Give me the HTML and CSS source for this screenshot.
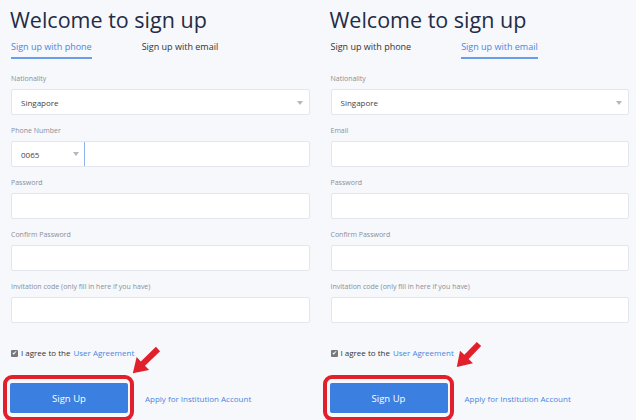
FILE: index.html
```html
<!DOCTYPE html>
<html lang="en">
<head>
  <meta charset="UTF-8">
  <title>Welcome to sign up</title>
  <link rel="stylesheet" href="styles.css">
</head>
<body>
  <div class="page">
    <div class="panel">
      <h1>Welcome to sign up</h1>
      <div class="tabs">
        <div class="tab active">Sign up with phone</div>
        <div class="tab">Sign up with email</div>
      </div>

      <div class="label">Nationality</div>
      <div class="box select">Singapore<span class="caret"></span></div>

      <div class="label">Phone Number</div>
      <div class="box phone">
        <div class="code">0065<span class="caret"></span></div>
        <div class="number"></div>
      </div>

      <div class="label">Password</div>
      <div class="box"></div>

      <div class="label">Confirm Password</div>
      <div class="box"></div>

      <div class="label">Invitation code (only fill in here if you have)</div>
      <div class="box"></div>

      <div class="agree"><span class="check">✔</span>I agree to the <a>User Agreement</a></div>

      <div class="actions">
        <div class="btn-wrap">
          <button class="btn">Sign Up</button>
          <span class="mark"></span>
        </div>
        <a class="inst">Apply for Institution Account</a>
      </div>
    </div>

    <div class="panel">
      <h1>Welcome to sign up</h1>
      <div class="tabs">
        <div class="tab">Sign up with phone</div>
        <div class="tab active">Sign up with email</div>
      </div>

      <div class="label">Nationality</div>
      <div class="box select">Singapore<span class="caret"></span></div>

      <div class="label">Email</div>
      <div class="box"></div>

      <div class="label">Password</div>
      <div class="box"></div>

      <div class="label">Confirm Password</div>
      <div class="box"></div>

      <div class="label">Invitation code (only fill in here if you have)</div>
      <div class="box"></div>

      <div class="agree"><span class="check">✔</span>I agree to the <a>User Agreement</a></div>

      <div class="actions">
        <div class="btn-wrap">
          <button class="btn">Sign Up</button>
          <span class="mark"></span>
        </div>
        <a class="inst">Apply for Institution Account</a>
      </div>
    </div>
  </div>

  <!-- red annotation arrows -->
  <svg class="arrows" width="636" height="420" viewBox="0 0 636 420">
    <polygon points="0,-3 21,-3 21,-9 35,0 21,9 21,3 0,3" transform="translate(158 349) rotate(136)"/>
    <polygon points="0,-3 18,-3 18,-9 32,0 18,9 18,3 0,3" transform="translate(479 344) rotate(134)"/>
  </svg>
</body>
</html>
```

FILE: styles.css
```css
html, body {
  margin: 0;
  padding: 0;
  width: 636px;
  height: 420px;
  overflow: hidden;
}

body {
  background: #f6f8fb;
  font-family: 'Open Sans', 'Noto Sans', sans-serif;
  color: #333;
  position: relative;
}

.page {
  display: flex;
  gap: 21px;
  padding: 0 7px 0 11px;
}

.panel {
  flex: 1;
  display: flex;
  flex-direction: column;
}

h1 {
  margin: 5px 0 0 -1px;
  font-size: 21.5px;
  line-height: 30px;
  font-weight: 400;
  color: #232c45;
}

.tabs {
  display: flex;
  gap: 50px;
  margin-bottom: 15px;
}

.tab {
  font-size: 9px;
  line-height: 16px;
  padding: 4px 0 2px;
  border-bottom: 2px solid transparent;
  color: #333;
}

.tab.active {
  color: #4a86e0;
  border-bottom-color: #6a9ee8;
}

.label {
  font-size: 7px;
  line-height: 10px;
  color: #8a8f99;
  margin-bottom: 5px;
}

.box {
  height: 26px;
  box-sizing: border-box;
  background: #fff;
  border: 1px solid #e3e6ec;
  border-radius: 2px;
  margin-bottom: 11px;
  font-size: 8px;
  color: #444;
  display: flex;
  align-items: center;
  position: relative;
}

.select {
  padding-left: 9px;
}

.caret {
  width: 0;
  height: 0;
  border-left: 3px solid transparent;
  border-right: 3px solid transparent;
  border-top: 4px solid #b4b8c0;
}

.select .caret {
  position: absolute;
  right: 6px;
  top: 11px;
}

.phone .code {
  width: 58px;
  height: 100%;
  padding-left: 9px;
  display: flex;
  align-items: center;
  justify-content: space-between;
  padding-right: 5px;
}

.phone .number {
  flex: 1;
  height: 100%;
  border-left: 1px solid #8fb3ec;
}

.agree {
  margin-top: 13px;
  display: flex;
  align-items: center;
  font-size: 8px;
  line-height: 12px;
  color: #333;
}

.agree a {
  color: #4a86e0;
  margin-left: 3px;
}

.check {
  width: 7px;
  height: 7px;
  background: #777;
  color: #fff;
  font-size: 6px;
  line-height: 7px;
  text-align: center;
  border-radius: 1px;
  margin-right: 3px;
}

.actions {
  margin-top: 24px;
  display: flex;
  align-items: center;
  gap: 17px;
}

.btn-wrap {
  position: relative;
  margin-left: -1px;
}

.btn {
  display: block;
  width: 118px;
  height: 30px;
  border: none;
  border-radius: 2px;
  background: #3b7fe0;
  color: #fff;
  font-family: inherit;
  font-size: 9.5px;
}

.mark {
  position: absolute;
  left: -7px;
  top: -8px;
  right: -6px;
  bottom: -8px;
  border: 4px solid #e2202b;
  border-radius: 9px;
}

.inst {
  font-size: 8px;
  color: #4a86e0;
}

.arrows {
  position: absolute;
  left: 0;
  top: 0;
  pointer-events: none;
  fill: #e2202b;
}
```
